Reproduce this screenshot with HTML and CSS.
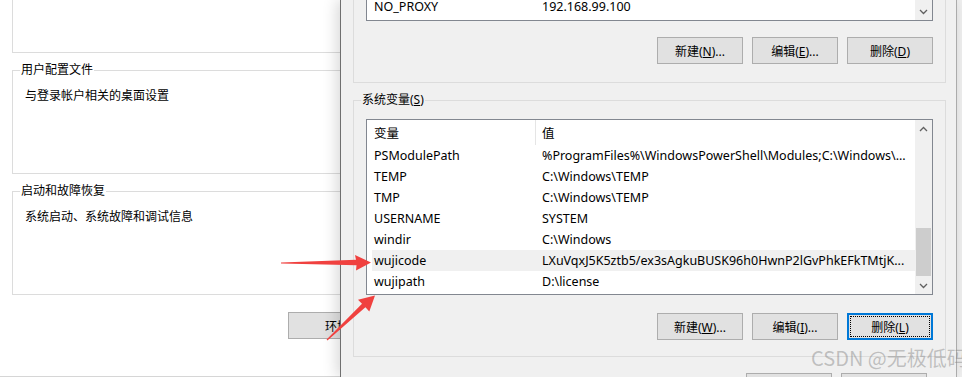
FILE: index.html
```html
<!DOCTYPE html>
<html lang="zh-CN">
<head>
    <meta charset="UTF-8">
    <meta name="viewport" content="width=device-width, initial-scale=1.0">
    <title>环境变量</title>
    <link rel="stylesheet" href="styles.css">
</head>
<body>

    <div class="screen">
        <div class="back-window">
            <div class="group group-cut"></div>
            <fieldset class="group">
                <legend>用户配置文件</legend>
                <p class="group-text">与登录帐户相关的桌面设置</p>
            </fieldset>
            <fieldset class="group">
                <legend>启动和故障恢复</legend>
                <p class="group-text">系统启动、系统故障和调试信息</p>
            </fieldset>
            <div class="back-actions">
                <button class="btn btn-wide">环境</button>
            </div>
            <div class="back-footer"></div>
        </div>

        <div class="dialog">
            <div class="dlg-group dlg-group-cut">
                <div class="list list-cut">
                    <div class="list-body">
                        <div class="row"><span class="cell-name">NO_PROXY</span><span class="cell-value">192.168.99.100</span></div>
                    </div>
                    <div class="scrollbar">
                        <div class="scroll-track"></div>
                        <div class="scroll-arrow">
                            <svg width="9" height="6" viewBox="0 0 9 6"><polyline points="1,1 4.5,4.5 8,1" /></svg>
                        </div>
                    </div>
                </div>
                <div class="actions">
                    <button class="btn">新建(<u>N</u>)...</button>
                    <button class="btn">编辑(<u>E</u>)...</button>
                    <button class="btn">删除(<u>D</u>)</button>
                </div>
            </div>

            <fieldset class="dlg-group">
                <legend>系统变量(<u>S</u>)</legend>
                <div class="dlg-inner">
                    <div class="list list-full">
                        <div class="list-body">
                            <div class="row row-head"><span class="cell-name">变量</span><span class="cell-value">值</span></div>
                            <div class="row"><span class="cell-name">PSModulePath</span><span class="cell-value">%ProgramFiles%\WindowsPowerShell\Modules;C:\Windows\...</span></div>
                            <div class="row"><span class="cell-name">TEMP</span><span class="cell-value">C:\Windows\TEMP</span></div>
                            <div class="row"><span class="cell-name">TMP</span><span class="cell-value">C:\Windows\TEMP</span></div>
                            <div class="row"><span class="cell-name">USERNAME</span><span class="cell-value">SYSTEM</span></div>
                            <div class="row"><span class="cell-name">windir</span><span class="cell-value">C:\Windows</span></div>
                            <div class="row row-selected"><span class="cell-name">wujicode</span><span class="cell-value">LXuVqxJ5K5ztb5/ex3sAgkuBUSK96h0HwnP2lGvPhkEFkTMtjK...</span></div>
                            <div class="row"><span class="cell-name">wujipath</span><span class="cell-value">D:\license</span></div>
                        </div>
                        <div class="scrollbar">
                            <div class="scroll-arrow">
                                <svg width="9" height="6" viewBox="0 0 9 6"><polyline points="1,5 4.5,1.5 8,5" /></svg>
                            </div>
                            <div class="scroll-track"><div class="scroll-thumb"></div></div>
                            <div class="scroll-arrow">
                                <svg width="9" height="6" viewBox="0 0 9 6"><polyline points="1,1 4.5,4.5 8,1" /></svg>
                            </div>
                        </div>
                    </div>
                    <div class="actions actions-sys">
                        <button class="btn">新建(<u>W</u>)...</button>
                        <button class="btn">编辑(<u>I</u>)...</button>
                        <button class="btn btn-focus">删除(<u>L</u>)</button>
                    </div>
                </div>
            </fieldset>

            <div class="dlg-footer">
                <button class="btn" aria-label="确定"></button>
                <button class="btn" aria-label="取消"></button>
            </div>
        </div>
    </div>

    <svg class="marks" width="962" height="377" viewBox="0 0 962 377">
        <polygon points="281,262.6 356,259.8 355,255 371,262.5 356,270.5 356.5,265.2 281,263.6" />
        <polygon points="326.6,339.6 362,303.7 358,299.8 375,295.5 369.3,311.6 365.4,307.3 327.4,340.4" />
    </svg>

    <div class="watermark">CSDN @无极低码</div>

</body>
</html>
```

FILE: styles.css
```css
* {
    box-sizing: border-box;
}
body {
    margin: 0;
    width: 962px;
    height: 377px;
    overflow: hidden;
    position: relative;
    background: #f0f0f0;
    font-family: "Noto Sans", "Noto Sans CJK SC", sans-serif;
    font-size: 12px;
    color: #000;
}
.screen {
    display: flex;
    height: 377px;
}

/* window behind the dialog */
.back-window {
    width: 340px;
    flex: none;
    background: #fff;
    overflow: hidden;
}
.group {
    margin: 10px 0 0 12px;
    padding: 0;
    width: 360px;
    min-width: 0;
    border: 1px solid #dcdcdc;
}
.group-cut {
    margin-top: 0;
    height: 53px;
    border-top: none;
}
.group legend,
.dlg-group legend {
    margin-left: 7px;
    padding: 0 1px;
    line-height: 14px;
}
.group-text {
    margin: 0;
    height: 96px;
    padding: 11px 0 0 12px;
    line-height: 16px;
}
.back-actions {
    display: flex;
    margin: 17px 0 0 288px;
}
.back-footer {
    margin-top: 37px;
    border-top: 1px solid #d6d6d6;
}

/* buttons */
.btn {
    width: 86px;
    height: 27px;
    padding: 0;
    flex: none;
    background: #e1e1e1;
    border: 1px solid #adadad;
    border-radius: 0;
    font: inherit;
    color: #000;
}
.btn u {
    text-underline-offset: 1px;
}
.btn-wide {
    width: 120px;
    text-align: left;
    padding-left: 36px;
}
.btn-focus {
    border: 2px solid #0078d7;
    outline: 1px dotted #000;
    outline-offset: -4px;
}

/* dialog */
.dialog {
    position: relative;
    width: 617px;
    flex: none;
    background: #f0f0f0;
    border-left: 1px solid #6f6f6f;
    border-right: 1px solid #ababab;
    padding: 0 10px 0 12px;
    box-shadow: -3px 0 14px rgba(0, 0, 0, 0.16);
}
.dlg-group {
    margin: 10px 0 0;
    padding: 0;
    min-width: 0;
    border: 1px solid #dcdcdc;
}
.dlg-group-cut {
    margin-top: 0;
    border-top: none;
    padding: 0 12px 18px;
}
.dlg-inner {
    padding: 12px 12px 16px;
}
.actions {
    display: flex;
    justify-content: flex-end;
    gap: 9px;
    margin-top: 16px;
}
.actions-sys {
    margin-top: 18px;
}
.dlg-footer {
    display: flex;
    justify-content: flex-end;
    gap: 9px;
    margin-top: 16px;
    padding-right: 19px;
}

/* list view */
.list {
    display: flex;
    background: #fff;
    border: 1px solid #828790;
    overflow: hidden;
}
.list-cut {
    height: 21px;
    border-top: none;
}
.list-cut .row {
    margin-top: -4px;
}
.list-full {
    height: 176px;
}
.list-body {
    flex: 1;
    min-width: 0;
}
.row {
    display: flex;
    align-items: center;
    height: 21px;
    white-space: nowrap;
    font-size: 12.5px;
}
.row-head {
    height: 25px;
    align-items: stretch;
}
.row-head span {
    display: flex;
    align-items: center;
}
.cell-name {
    width: 169px;
    flex: none;
    padding-left: 7px;
    border-right: 1px solid transparent;
}
.row-head .cell-name {
    border-right-color: #e5e5e5;
}
.cell-value {
    flex: 1;
    min-width: 0;
    padding-left: 6px;
    overflow: hidden;
}
.row-selected {
    background: linear-gradient(to right, transparent 5px, #f0f0f0 5px);
}
.scrollbar {
    width: 17px;
    flex: none;
    display: flex;
    flex-direction: column;
    background: #f0f0f0;
}
.scroll-arrow {
    height: 17px;
    flex: none;
    display: flex;
    align-items: center;
    justify-content: center;
}
.scroll-arrow polyline {
    fill: none;
    stroke: #606060;
    stroke-width: 1.3;
}
.scroll-track {
    flex: 1;
}
.scroll-thumb {
    margin: 91px 1px 0;
    height: 48px;
    background: #cdcdcd;
}

/* annotations over the screenshot */
.marks {
    position: absolute;
    top: 0;
    left: 0;
    pointer-events: none;
}
.marks polygon {
    fill: #f0413f;
}
.watermark {
    position: absolute;
    left: 811px;
    top: 343px;
    white-space: nowrap;
    font-family: "Noto Sans CJK SC", sans-serif;
    font-size: 20px;
    color: rgba(130, 130, 130, 0.45);
}
```
